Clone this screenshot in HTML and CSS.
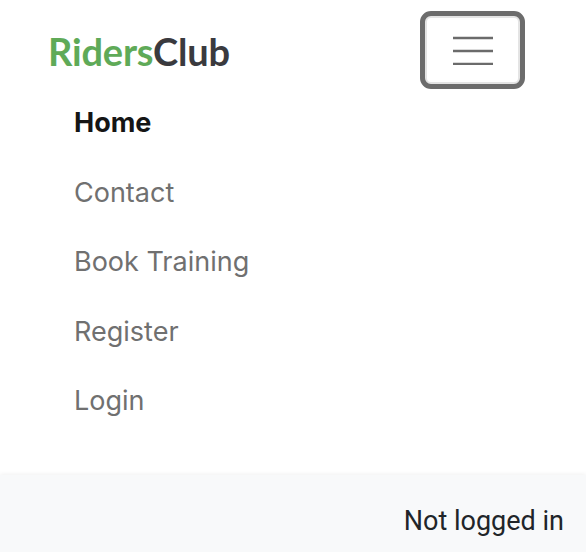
FILE: index.html
```html
<!DOCTYPE html>
<html lang="en">
<head>
<meta charset="utf-8">
<title>RidersClub</title>
<link rel="stylesheet" href="styles.css">
</head>
<body>
<header class="navbar">
  <div class="navbar-top">
    <a class="brand" href="#"><span class="brand-green">Riders</span><span class="brand-dark">Club</span></a>
    <button class="toggler" aria-label="Toggle navigation">
      <svg width="40" height="30" viewBox="0 0 40 30" aria-hidden="true">
        <path d="M0 3H40M0 16H40M0 29H40" stroke="#6b6b6b" stroke-width="2.6" stroke-linecap="round"/>
      </svg>
    </button>
  </div>
  <nav class="nav">
    <a class="nav-link active" href="#">Home</a>
    <a class="nav-link" href="#">Contact</a>
    <a class="nav-link" href="#">Book Training</a>
    <a class="nav-link" href="#">Register</a>
    <a class="nav-link" href="#">Login</a>
  </nav>
</header>
<footer class="footer">
  <span class="status">Not logged in</span>
</footer>
</body>
</html>
```

FILE: styles.css
```css
* { box-sizing: border-box; }
html, body { margin: 0; padding: 0; }
body {
  width: 586px;
  height: 552px;
  overflow: hidden;
  background: #ffffff;
  font-family: Inter, "Noto Sans", sans-serif;
  display: flex;
  flex-direction: column;
}
.navbar {
  flex: 0 0 auto;
  height: 475px;
  padding: 0 0 0 48px;
}
.navbar-top {
  display: flex;
  align-items: center;
  justify-content: space-between;
  padding-right: 61px;
  height: 100px;
  padding-top: 2px;
}
.brand {
  text-decoration: none;
  font-family: Lato, sans-serif;
  font-weight: 700;
  font-size: 38px;
  letter-spacing: -0.2px;
  line-height: 1;
}
.brand-green { color: #5faa58; }
.brand-dark { color: #3a3a3e; }
.toggler {
  width: 105px;
  height: 78px;
  border: 5px solid #6c6c6c;
  border-radius: 11px;
  background: #fff;
  box-shadow: inset 0 0 0 2px #e4e4e4;
  display: flex;
  align-items: center;
  justify-content: center;
  padding: 0;
  margin-top: -2px;
}
.nav {
  display: flex;
  flex-direction: column;
  padding-left: 26px;
  margin-top: -12px;
}
.nav-link {
  text-decoration: none;
  font-size: 27px;
  line-height: 69.5px;
  color: #707070;
}
.nav-link.active {
  color: #151515;
  font-weight: 700;
}
.footer {
  flex: 1 1 auto;
  background: #f8f9fa;
  box-shadow: 0 -1px 4px rgba(0,0,0,0.06);
  display: flex;
  justify-content: flex-end;
  align-items: flex-start;
  padding: 29px 22px 0 0;
}
.status {
  font-family: Roboto, Inter, sans-serif;
  font-size: 27px;
  line-height: 34px;
  color: #212529;
}
```
